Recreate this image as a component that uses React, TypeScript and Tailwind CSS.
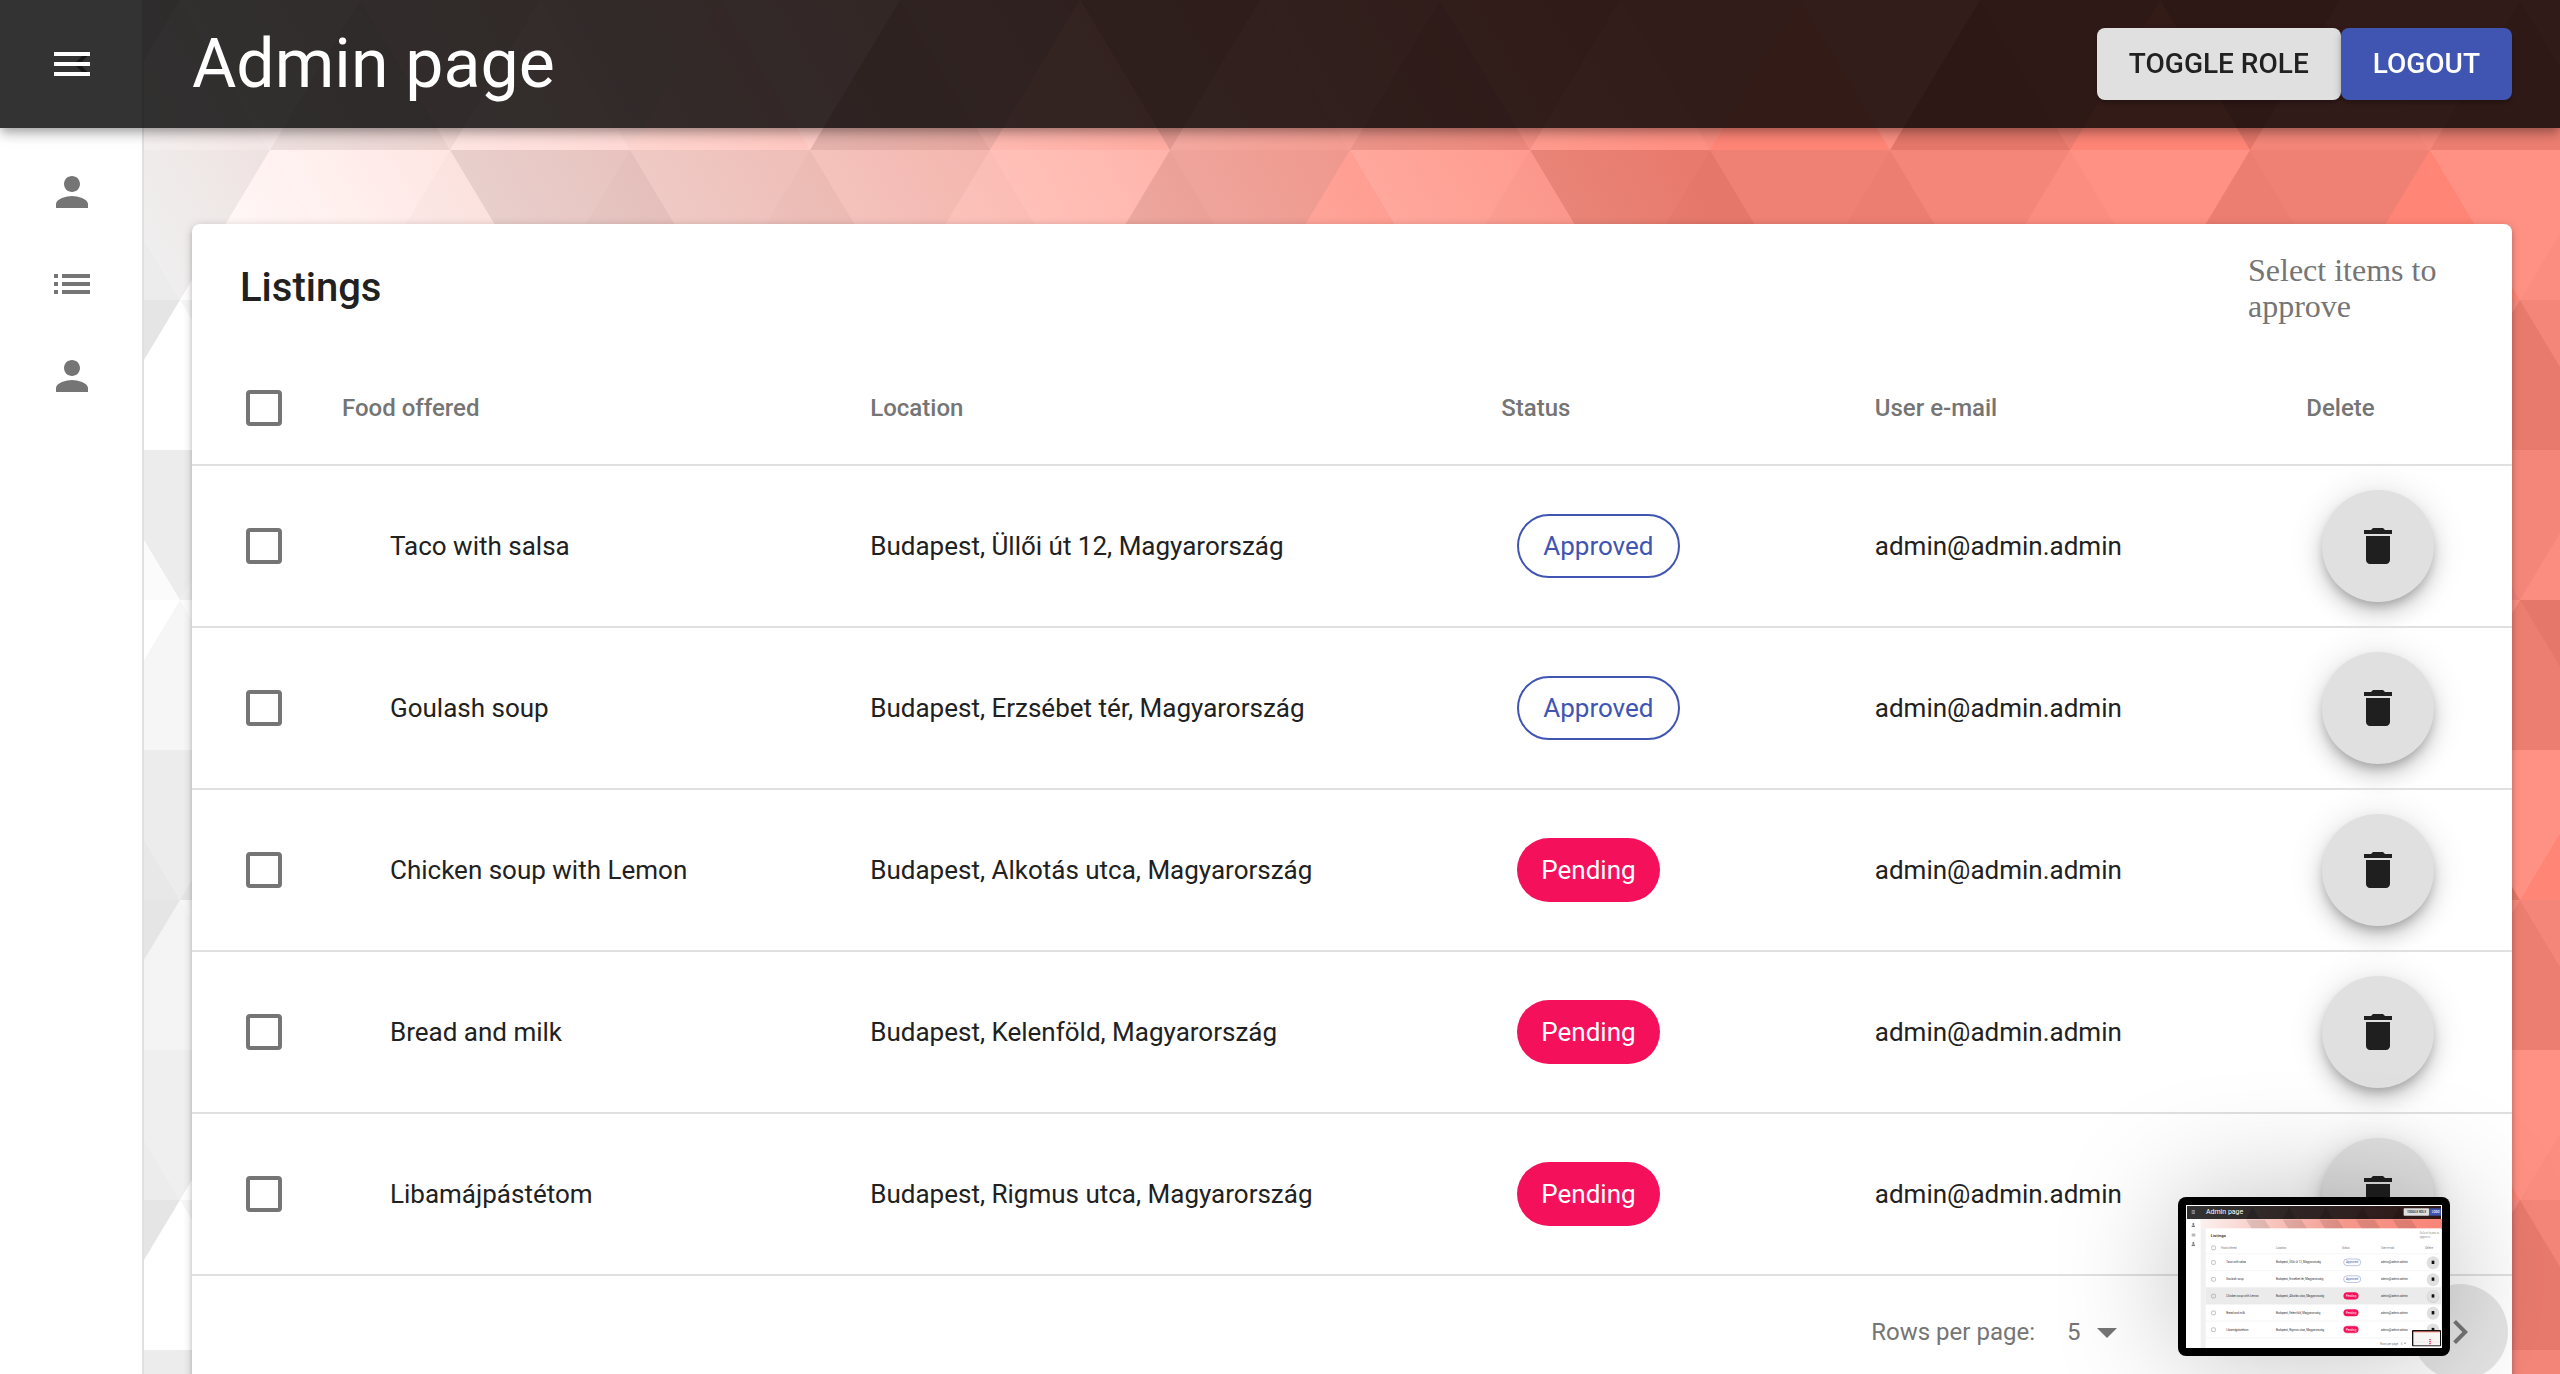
import React from "react";

type Listing = {
  food: string;
  location: string;
  status: "Approved" | "Pending";
  email: string;
};

const listings: Listing[] = [
  { food: "Taco with salsa", location: "Budapest, Üllői út 12, Magyarország", status: "Approved", email: "admin@admin.admin" },
  { food: "Goulash soup", location: "Budapest, Erzsébet tér, Magyarország", status: "Approved", email: "admin@admin.admin" },
  { food: "Chicken soup with Lemon", location: "Budapest, Alkotás utca, Magyarország", status: "Pending", email: "admin@admin.admin" },
  { food: "Bread and milk", location: "Budapest, Kelenföld, Magyarország", status: "Pending", email: "admin@admin.admin" },
  { food: "Libamájpástétom", location: "Budapest, Rigmus utca, Magyarország", status: "Pending", email: "admin@admin.admin" },
];

/* Prism backdrop: fill and corner points of every facet in one 1080x900 tile. */
const facets: [string, string][] = [
  ["#444", "90 150 0 300 180 300"],
  ["#000", "90 150 180 0 0 0"],
  ["#aaa", "270 150 360 0 180 0"],
  ["#ddd", "450 150 360 300 540 300"],
  ["#999", "450 150 540 0 360 0"],
  ["#000", "630 150 540 300 720 300"],
  ["#ddd", "630 150 720 0 540 0"],
  ["#444", "810 150 720 300 900 300"],
  ["#fff", "810 150 900 0 720 0"],
  ["#ddd", "990 150 900 300 1080 300"],
  ["#444", "990 150 1080 0 900 0"],
  ["#ddd", "90 450 0 600 180 600"],
  ["#000", "90 450 180 300 0 300"],
  ["#666", "270 450 180 600 360 600"],
  ["#aaa", "270 450 360 300 180 300"],
  ["#ddd", "450 450 360 600 540 600"],
  ["#999", "450 450 540 300 360 300"],
  ["#999", "630 450 540 600 720 600"],
  ["#fff", "630 450 720 300 540 300"],
  ["#000", "810 450 720 600 900 600"],
  ["#ddd", "810 450 900 300 720 300"],
  ["#aaa", "990 450 900 600 1080 600"],
  ["#444", "990 450 1080 300 900 300"],
  ["#222", "90 750 0 900 180 900"],
  ["#000", "270 750 180 900 360 900"],
  ["#ddd", "270 750 360 600 180 600"],
  ["#000", "450 750 540 600 360 600"],
  ["#000", "630 750 540 900 720 900"],
  ["#444", "630 750 720 600 540 600"],
  ["#aaa", "810 750 720 900 900 900"],
  ["#666", "810 750 900 600 720 600"],
  ["#999", "990 750 900 900 1080 900"],
  ["#999", "180 0 90 150 270 150"],
  ["#444", "360 0 270 150 450 150"],
  ["#fff", "540 0 450 150 630 150"],
  ["#000", "900 0 810 150 990 150"],
  ["#222", "0 300 -90 450 90 450"],
  ["#fff", "0 300 90 150 -90 150"],
  ["#fff", "180 300 90 450 270 450"],
  ["#666", "180 300 270 150 90 150"],
  ["#222", "360 300 270 450 450 450"],
  ["#fff", "360 300 450 150 270 150"],
  ["#444", "540 300 450 450 630 450"],
  ["#222", "540 300 630 150 450 150"],
  ["#aaa", "720 300 630 450 810 450"],
  ["#666", "720 300 810 150 630 150"],
  ["#fff", "900 300 810 450 990 450"],
  ["#999", "900 300 990 150 810 150"],
  ["#000", "0 600 -90 750 90 750"],
  ["#666", "0 600 90 450 -90 450"],
  ["#aaa", "180 600 90 750 270 750"],
  ["#444", "180 600 270 450 90 450"],
  ["#444", "360 600 270 750 450 750"],
  ["#999", "360 600 450 450 270 450"],
  ["#666", "540 600 630 450 450 450"],
  ["#222", "720 600 630 750 810 750"],
  ["#fff", "900 600 810 750 990 750"],
  ["#222", "900 600 990 450 810 450"],
  ["#ddd", "0 900 90 750 -90 750"],
  ["#444", "180 900 270 750 90 750"],
  ["#fff", "360 900 450 750 270 750"],
  ["#aaa", "540 900 630 750 450 750"],
  ["#fff", "720 900 810 750 630 750"],
  ["#222", "900 900 990 750 810 750"],
  ["#222", "1080 300 990 450 1170 450"],
  ["#fff", "1080 300 1170 150 990 150"],
  ["#000", "1080 600 990 750 1170 750"],
  ["#666", "1080 600 1170 450 990 450"],
  ["#ddd", "1080 900 1170 750 990 750"],
];

function Backdrop() {
  return (
    <svg className="absolute inset-0 h-full w-full" aria-hidden="true">
      <defs>
        <linearGradient id="prism-tint" gradientUnits="userSpaceOnUse" x1="0" x2="0" y1="0" y2="100%" gradientTransform="rotate(240)">
          <stop offset="0" stopColor="#ffffff" />
          <stop offset="1" stopColor="#ff8576" />
        </linearGradient>
        <pattern id="prism-facets" patternUnits="userSpaceOnUse" width="1080" height="900">
          <g fillOpacity="0.1">
            {facets.map(([fill, points]) => (
              <polygon key={points} fill={fill} points={points} />
            ))}
          </g>
        </pattern>
      </defs>
      <rect width="100%" height="100%" fill="url(#prism-tint)" />
      <rect width="100%" height="100%" fill="url(#prism-facets)" />
    </svg>
  );
}

const icons = {
  menu: "M3 18h18v-2H3v2zm0-5h18v-2H3v2zm0-7v2h18V6H3z",
  person: "M12 12c2.21 0 4-1.79 4-4s-1.79-4-4-4-4 1.79-4 4 1.79 4 4 4zm0 2c-2.67 0-8 1.34-8 4v2h16v-2c0-2.66-5.33-4-8-4z",
  list: "M3 13h2v-2H3v2zm0 4h2v-2H3v2zm0-8h2V7H3v2zm4 4h14v-2H7v2zm0 4h14v-2H7v2zM7 7v2h14V7H7z",
  trash: "M6 19c0 1.1.9 2 2 2h8c1.1 0 2-.9 2-2V7H6v12zM19 4h-3.5l-1-1h-5l-1 1H5v2h14V4z",
  left: "M15.41 7.41L14 6l-6 6 6 6 1.41-1.41L10.83 12z",
  right: "M10 6L8.59 7.41 13.17 12l-4.58 4.59L10 18l6-6z",
  drop: "M7 10l5 5 5-5z",
};

function Icon({ name, className = "" }: { name: keyof typeof icons; className?: string }) {
  return (
    <svg viewBox="0 0 24 24" fill="currentColor" className={`size-12 shrink-0 ${className}`} aria-hidden="true">
      <path d={icons[name]} />
    </svg>
  );
}

function Check({ label }: { label: string }) {
  return (
    <input
      type="checkbox"
      aria-label={label}
      className="block size-9 appearance-none rounded-sm border-4 border-[#757575] bg-white checked:bg-[#4055b2]"
    />
  );
}

function StatusChip({ status }: { status: Listing["status"] }) {
  return status === "Approved" ? (
    <span className="ml-4 inline-flex h-16 items-center rounded-full border-2 border-[#4055b2] px-6 text-[26px] text-[#4055b2]">
      {status}
    </span>
  ) : (
    <span className="ml-4 inline-flex h-16 items-center rounded-full bg-[#f4105a] px-6 text-[26px] text-white">
      {status}
    </span>
  );
}

function Preview() {
  const peaks = [180, 290, 400, 510, 620];
  return (
    <svg viewBox="0 0 768 430" className="block h-auto w-full" role="img" aria-label="Screen preview" fontFamily="Roboto, sans-serif">
      <defs>
        <linearGradient id="mini-tint">
          <stop offset="0" stopColor="#fbf1ef" />
          <stop offset="0.6" stopColor="#f5988c" />
          <stop offset="1" stopColor="#f98577" />
        </linearGradient>
        <linearGradient id="mini-bar">
          <stop offset="0" stopColor="#333" />
          <stop offset="0.4" stopColor="#2f2625" />
          <stop offset="1" stopColor="#2e1817" />
        </linearGradient>
      </defs>
      <rect width="768" height="430" fill="#fff" />
      <rect x="44" y="40" width="724" height="390" fill="#f1f0f0" />
      <rect x="44" y="42" width="724" height="30" fill="url(#mini-tint)" />
      {peaks.map((x) => (
        <path key={x} d={`M${x} 44h56l18 28h-56z`} fill="#000" fillOpacity="0.1" />
      ))}
      <rect x="3" y="3" width="762" height="39" fill="url(#mini-bar)" />
      {peaks.map((x) => (
        <path key={x} d={`M${x} 42l20-36 20 36z`} fill="#000" fillOpacity="0.15" />
      ))}
      <path d="M17 17h10M17 21h10M17 25h10" stroke="#ccc" strokeWidth="2" />
      <text x="60" y="28" fontSize="21" fill="#fff">Admin page</text>
      <rect x="653" y="10" width="76" height="22" rx="2" fill="#e0e0e0" />
      <text x="663" y="25" fontSize="9" fontWeight="500" fill="#222">TOGGLE ROLE</text>
      <rect x="729" y="10" width="36" height="22" fill="#4055b2" />
      <text x="738" y="25" fontSize="9" fontWeight="500" fill="#fff">LOGO</text>
      <g fill="#757575">
        <circle cx="22" cy="57" r="3" />
        <path d="M17 66v-3q5-4 10 0v3z" />
        <path d="M17 86h11v2H17zM17 89h11v2H17zM17 92h11v2H17z" />
        <circle cx="22" cy="114" r="3" />
        <path d="M17 123v-3q5-4 10 0v3z" />
      </g>
      <rect x="59" y="70" width="706" height="360" fill="#fff" />
      <text x="74" y="96" fontSize="13" fontWeight="500" fill="#222">Listings</text>
      <g fontFamily="Liberation Serif, serif" fontSize="10" fill="#888">
        <text x="701" y="88">Select items to</text>
        <text x="701" y="100">approve</text>
      </g>
      <g fontSize="8" fill="#777">
        <rect x="77" y="123" width="11" height="11" rx="2" fill="none" stroke="#888" strokeWidth="1.5" />
        <text x="106" y="131">Food offered</text>
        <text x="270" y="131">Location</text>
        <text x="468" y="131">Status</text>
        <text x="585" y="131">User e-mail</text>
        <text x="718" y="131">Delete</text>
      </g>
      {listings.map((row, i) => {
        const mid = 172 + i * 50.4;
        const approved = row.status === "Approved";
        return (
          <g key={row.food} fontSize="8.5" fill="#333">
            {i === 2 && <rect x="59" y={mid - 25} width="706" height="50" fill="#ebebeb" />}
            <path d={`M59 ${mid - 25.5}h706`} stroke="#e4e4e4" strokeWidth="1" />
            <rect x="77" y={mid - 5} width="11" height="11" rx="2" fill="none" stroke="#888" strokeWidth="1.5" />
            <text x="121" y={mid + 3}>{row.food}</text>
            <text x="270" y={mid + 3}>{row.location}</text>
            <rect x="473" y={mid - 10} width={approved ? 51 : 44} height="20" rx="10" fill={approved ? "#fff" : "#f4105a"} stroke={approved ? "#7986cb" : "#f4105a"} strokeWidth="1.5" />
            <text x="480" y={mid + 3} fill={approved ? "#4055b2" : "#fff"}>{row.status}</text>
            <text x="585" y={mid + 3}>{row.email}</text>
            <circle cx="741" cy={mid + 2} r="19" fill="#000" fillOpacity="0.12" />
            <circle cx="741" cy={mid} r="18" fill="#e0e0e0" />
            <path d={`M737 ${mid - 5}h8v10h-8z`} fill="#111" />
          </g>
        );
      })}
      <path d="M59 398.500h706" stroke="#e4e4e4" />
      <g fontSize="8" fill="#777">
        <text x="583" y="419">Rows per page:</text>
        <text x="644" y="419">5</text>
        <path d="M653 413h8l-4 4z" />
      </g>
      <rect x="678" y="375" width="87" height="49" rx="3" fill="#111" />
      <rect x="682" y="381" width="80" height="40" fill="#f7f4f4" />
      <rect x="682" y="379" width="80" height="3" fill="#f98577" />
      <path d="M682 411h80" stroke="#ddd" />
      <path d="M732 402v18" stroke="#f4105a" strokeWidth="4" strokeDasharray="4 2" />
    </svg>
  );
}

const headCell = "pl-12 text-left text-2xl font-medium text-[#757575]";
const bodyCell = "pl-12 text-[26px] text-[#212121]";

export default function App() {
  return (
    <div className="relative flex h-screen overflow-hidden bg-white font-[Roboto,sans-serif]">
      <Backdrop />

      <header className="fixed inset-x-0 top-0 z-20 flex h-32 items-center bg-black/80 pr-12 shadow-[0_4px_8px_-2px_rgba(0,0,0,0.2),0_8px_10px_0_rgba(0,0,0,0.14),0_2px_20px_0_rgba(0,0,0,0.12)]">
        <div className="flex w-36 shrink-0 justify-center">
          <button type="button" aria-label="Open menu" className="text-white">
            <Icon name="menu" />
          </button>
        </div>
        <h1 className="grow pl-12 text-[68px] leading-20 text-white">Admin page</h1>
        <button type="button" className="h-18 rounded-lg bg-[#e0e0e0] px-8 text-[28px] font-medium text-[#212121] shadow-[0_2px_10px_0_rgba(0,0,0,0.2),0_4px_4px_0_rgba(0,0,0,0.14)]">
          TOGGLE ROLE
        </button>
        <button type="button" className="h-18 rounded-lg bg-[#4055b2] px-8 text-[28px] font-medium text-white shadow-[0_2px_10px_0_rgba(0,0,0,0.2),0_4px_4px_0_rgba(0,0,0,0.14)]">
          LOGOUT
        </button>
      </header>

      <aside className="relative z-10 w-36 shrink-0 border-r-2 border-[#e0e0e0] bg-white">
        <div className="flex h-32 items-center justify-end pr-9 text-[#757575]">
          <Icon name="left" />
        </div>
        <nav aria-label="Main" className="flex w-36 flex-col pt-[18px] text-[#757575]">
          <a href="#users" aria-label="Users" className="flex h-23 items-center justify-center"><Icon name="person" /></a>
          <a href="#listings" aria-label="Listings" className="flex h-23 items-center justify-center"><Icon name="list" /></a>
          <a href="#profile" aria-label="Profile" className="flex h-23 items-center justify-center"><Icon name="person" /></a>
        </nav>
      </aside>

      <main className="relative grow px-12 pt-56">
        <section className="rounded-lg bg-white shadow-[0_2px_10px_0_rgba(0,0,0,0.2),0_4px_4px_0_rgba(0,0,0,0.14),0_6px_2px_-4px_rgba(0,0,0,0.12)]">
          <div className="flex h-32 items-center justify-between px-12">
            <h2 className="text-[40px] font-medium text-[#212121]">Listings</h2>
            <p className="w-54 font-['Liberation_Serif',serif] text-[32px] leading-9 text-[#757575]">Select items to approve</p>
          </div>

          <table className="w-full table-fixed border-collapse">
            <colgroup>
              <col className="w-[150px]" />
              <col className="w-[20.7%]" />
              <col className="w-[27.2%]" />
              <col className="w-[16.1%]" />
              <col className="w-[18.6%]" />
              <col />
            </colgroup>
            <thead>
              <tr className="h-[113px] border-b-2 border-[#e0e0e0]">
                <th className="pl-[54px]"><Check label="Select all listings" /></th>
                <th className="text-left text-2xl font-medium text-[#757575]">Food offered</th>
                <th className={headCell}>Location</th>
                <th className={headCell}>Status</th>
                <th className={headCell}>User e-mail</th>
                <th className={headCell}>Delete</th>
              </tr>
            </thead>
            <tbody>
              {listings.map((row) => (
                <tr key={row.food} className="h-[162px] border-b-2 border-[#e0e0e0]">
                  <td className="pl-[54px]"><Check label={`Select ${row.food}`} /></td>
                  <td className={bodyCell}>{row.food}</td>
                  <td className={bodyCell}>{row.location}</td>
                  <td className={bodyCell}><StatusChip status={row.status} /></td>
                  <td className={bodyCell}>{row.email}</td>
                  <td className={bodyCell}>
                    <button
                      type="button"
                      aria-label={`Delete ${row.food}`}
                      className="ml-4 flex size-28 items-center justify-center rounded-full bg-[#e0e0e0] text-[#1f1f1f] shadow-[0_6px_10px_-2px_rgba(0,0,0,0.2),0_12px_20px_0_rgba(0,0,0,0.14),0_2px_36px_0_rgba(0,0,0,0.12)]"
                    >
                      <Icon name="trash" />
                    </button>
                  </td>
                </tr>
              ))}
            </tbody>
          </table>

          <div className="flex h-28 items-center justify-end pr-1 text-2xl text-[#757575]">
            <label htmlFor="rows-per-page">Rows per page:</label>
            <div className="relative mr-16 ml-4 flex items-center">
              <select id="rows-per-page" defaultValue="5" className="h-12 w-20 appearance-none bg-transparent pl-4">
                <option>5</option>
                <option>10</option>
                <option>25</option>
              </select>
              <Icon name="drop" className="pointer-events-none absolute right-0" />
            </div>
            <span>1-5 of 5</span>
            <button type="button" aria-label="Previous page" className="ml-10 flex size-24 items-center justify-center rounded-full text-black/25">
              <Icon name="left" />
            </button>
            <button type="button" aria-label="Next page" className="flex size-24 items-center justify-center rounded-full bg-black/10 text-[#757575]">
              <Icon name="right" />
            </button>
          </div>
        </section>
      </main>

      <div className="fixed right-[110px] bottom-[18px] z-30 w-68 rounded-lg bg-black p-2 shadow-[0_0_120px_0_rgba(0,0,0,0.25)]">
        <Preview />
      </div>
    </div>
  );
}
